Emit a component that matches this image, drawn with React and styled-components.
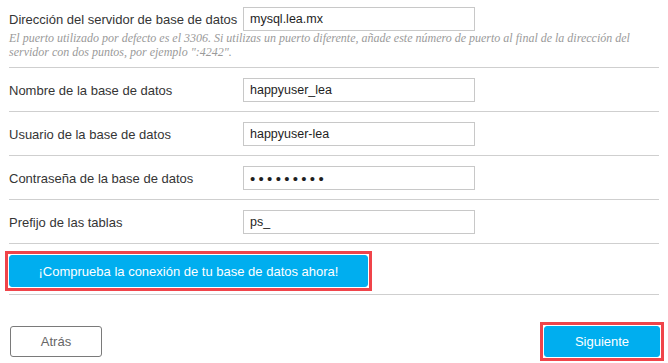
import React from 'react'
import styled, { createGlobalStyle } from 'styled-components'

const GlobalStyle = createGlobalStyle`
  body {
    margin: 0;
    background: #fff;
    font-family: "Liberation Sans", Arial, sans-serif;
    color: #333;
  }
`

const Page = styled.div`
  width: 650px;
  padding-left: 9px;
`

const Row = styled.div`
  border-bottom: 1px solid #cfcfcf;
  padding: ${(p) => (p.first ? '7px 0 8px' : '10px 0 9px')};
`

const Field = styled.div`
  display: flex;
  align-items: center;
`

const Label = styled.label`
  width: 234px;
  font-size: 13px;
  color: #353535;
`

const Input = styled.input`
  box-sizing: border-box;
  width: 232px;
  height: 24px;
  border: 1px solid #c8c8c8;
  padding: 0 6px;
  font-family: "Liberation Sans", Arial, sans-serif;
  font-size: ${(p) => (p.type === 'password' ? '15px' : '12.5px')};
  letter-spacing: ${(p) => (p.type === 'password' ? '3.3px' : 'normal')};
  color: #1e1e1e;
  outline: none;
`

const Hint = styled.p`
  margin: 0;
  font-family: Georgia, "Liberation Serif", serif;
  font-style: italic;
  font-size: 12px;
  line-height: 14px;
  color: #9a9a9a;
  white-space: nowrap;
`

const ButtonRow = styled.div`
  border-bottom: 1px solid #cfcfcf;
  padding: 7px 0 3px;
`

const Frame = styled.div`
  display: inline-flex;
  border: 3px solid #f0444a;
  padding: 1px;
  background: #fff;
  margin-left: ${(p) => p.shift || 0}px;
`

const Button = styled.button`
  box-sizing: border-box;
  height: ${(p) => p.h}px;
  width: ${(p) => p.w}px;
  border-radius: 3px;
  font-family: "Liberation Sans", Arial, sans-serif;
  font-size: 13px;
  cursor: pointer;
  padding: 0;
  border: ${(p) => (p.primary ? '1px solid #00aeef' : '1px solid #7a7a7a')};
  background: ${(p) => (p.primary ? '#00aeef' : '#fff')};
  color: ${(p) => (p.primary ? '#fff' : '#666')};
`

const Footer = styled.div`
  display: flex;
  justify-content: space-between;
  align-items: center;
  margin-left: 1px;
  padding-top: 27px;
  width: 654px;
`

const fields = [
  ['Nombre de la base de datos', 'happyuser_lea', 'text'],
  ['Usuario de la base de datos', 'happyuser-lea', 'text'],
  ['Contraseña de la base de datos', '123456789', 'password'],
  ['Prefijo de las tablas', 'ps_', 'text'],
]

export default function App() {
  return (
    <>
      <GlobalStyle />
      <Page>
        <Row first>
          <Field>
            <Label>Dirección del servidor de base de datos</Label>
            <Input defaultValue="mysql.lea.mx" />
          </Field>
          <Hint>
            El puerto utilizado por defecto es el 3306. Si utilizas un puerto diferente, añade este
            número de puerto al final de la dirección del
            <br />
            servidor con dos puntos, por ejemplo ":4242".
          </Hint>
        </Row>
        {fields.map(([label, value, type]) => (
          <Row key={label}>
            <Field>
              <Label>{label}</Label>
              <Input type={type} defaultValue={value} />
            </Field>
          </Row>
        ))}
        <ButtonRow>
          <Frame shift={-4}>
            <Button primary w={359} h={32}>
              ¡Comprueba la conexión de tu base de datos ahora!
            </Button>
          </Frame>
        </ButtonRow>
        <Footer>
          <Button w={92} h={31}>Atrás</Button>
          <Frame>
            <Button primary w={116} h={31}>Siguiente</Button>
          </Frame>
        </Footer>
      </Page>
    </>
  )
}
